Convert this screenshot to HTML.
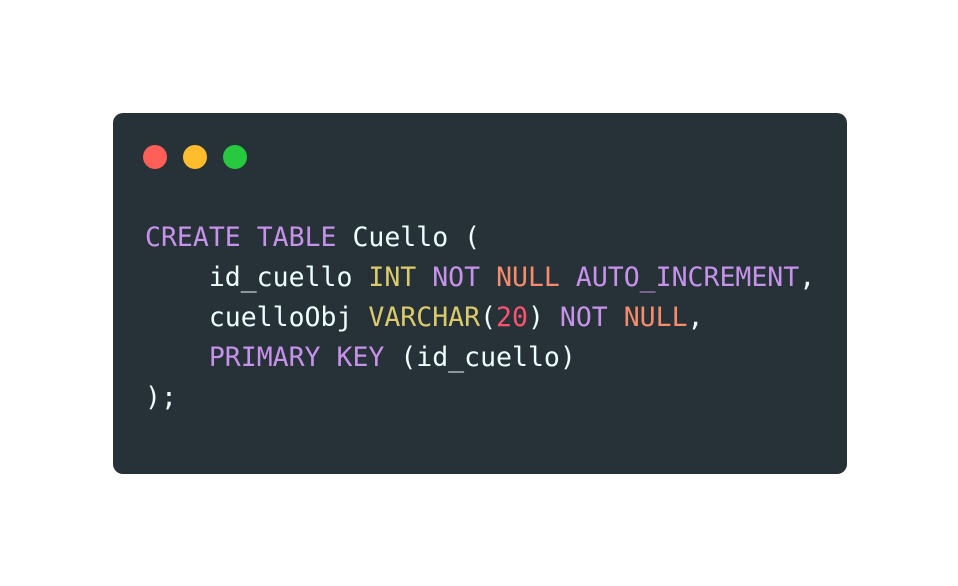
<!DOCTYPE html>
<html><head><style>
html,body{margin:0;padding:0;background:#fff;width:958px;height:586px;overflow:hidden}
.card{position:absolute;left:113px;top:113px;width:734px;height:361px;background:#263238;border-radius:10px}
.dot{position:absolute;top:32px;width:24px;height:24px;border-radius:50%}
pre{position:absolute;left:32px;top:105px;margin:0;font-family:"DejaVu Sans Mono","Liberation Mono",monospace;font-size:26.5px;line-height:40px;color:#eeffff}
.k{color:#c792ea}.t{color:#dccb6b}.o{color:#f78c6c}.n{color:#ff5370}
</style></head><body>
<div class="card">
<div class="dot" style="left:30px;background:#ff5f56"></div>
<div class="dot" style="left:70px;background:#ffbd2e"></div>
<div class="dot" style="left:110px;background:#27c93f"></div>
<pre><span class="k">CREATE</span> <span class="k">TABLE</span> Cuello (
    id_cuello <span class="t">INT</span> <span class="k">NOT</span> <span class="o">NULL</span> <span class="k">AUTO_INCREMENT</span>,
    cuelloObj <span class="t">VARCHAR</span>(<span class="n">20</span>) <span class="k">NOT</span> <span class="o">NULL</span>,
    <span class="k">PRIMARY</span> <span class="k">KEY</span> (id_cuello)
);</pre>
</div>
</body></html>
